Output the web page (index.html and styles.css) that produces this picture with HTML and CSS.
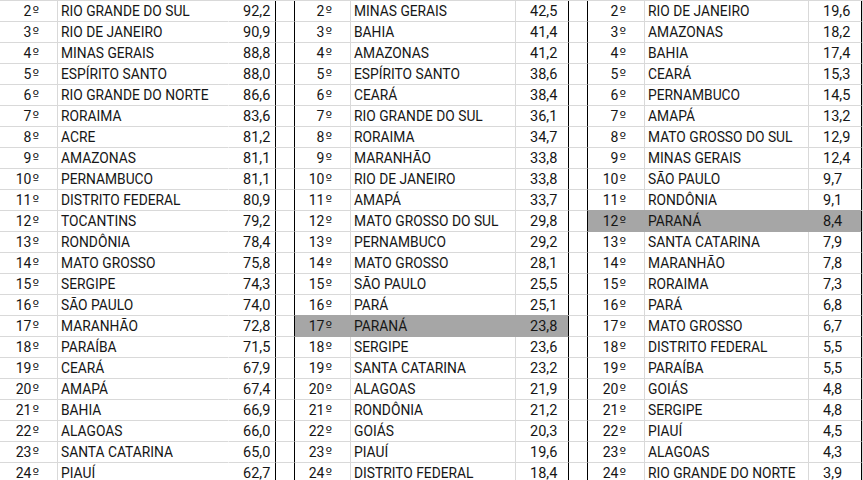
FILE: index.html
```html
<!DOCTYPE html>
<html lang="pt">
<head>
<meta charset="utf-8">
<title>Ranking</title>
<link rel="stylesheet" href="styles.css">
</head>
<body>
<div class="sheet">
  <div class="row"><div class="r">2<span class="o">º</span></div><div class="n nb">RIO GRANDE DO SUL</div><div class="v end">92,2</div><div class="g end"></div><div class="r">2<span class="o">º</span></div><div class="n">MINAS GERAIS</div><div class="v end">42,5</div><div class="g end"></div><div class="r">2<span class="o">º</span></div><div class="n">RIO DE JANEIRO</div><div class="v end">19,6</div><div class="g"></div></div>
  <div class="row"><div class="r">3<span class="o">º</span></div><div class="n nb">RIO DE JANEIRO</div><div class="v end">90,9</div><div class="g end"></div><div class="r">3<span class="o">º</span></div><div class="n">BAHIA</div><div class="v end">41,4</div><div class="g end"></div><div class="r">3<span class="o">º</span></div><div class="n">AMAZONAS</div><div class="v end">18,2</div><div class="g"></div></div>
  <div class="row"><div class="r">4<span class="o">º</span></div><div class="n nb">MINAS GERAIS</div><div class="v end">88,8</div><div class="g end"></div><div class="r">4<span class="o">º</span></div><div class="n">AMAZONAS</div><div class="v end">41,2</div><div class="g end"></div><div class="r">4<span class="o">º</span></div><div class="n">BAHIA</div><div class="v end">17,4</div><div class="g"></div></div>
  <div class="row"><div class="r">5<span class="o">º</span></div><div class="n nb">ESPÍRITO SANTO</div><div class="v end">88,0</div><div class="g end"></div><div class="r">5<span class="o">º</span></div><div class="n">ESPÍRITO SANTO</div><div class="v end">38,6</div><div class="g end"></div><div class="r">5<span class="o">º</span></div><div class="n">CEARÁ</div><div class="v end">15,3</div><div class="g"></div></div>
  <div class="row"><div class="r">6<span class="o">º</span></div><div class="n nb">RIO GRANDE DO NORTE</div><div class="v end">86,6</div><div class="g end"></div><div class="r">6<span class="o">º</span></div><div class="n">CEARÁ</div><div class="v end">38,4</div><div class="g end"></div><div class="r">6<span class="o">º</span></div><div class="n">PERNAMBUCO</div><div class="v end">14,5</div><div class="g"></div></div>
  <div class="row"><div class="r">7<span class="o">º</span></div><div class="n nb">RORAIMA</div><div class="v end">83,6</div><div class="g end"></div><div class="r">7<span class="o">º</span></div><div class="n">RIO GRANDE DO SUL</div><div class="v end">36,1</div><div class="g end"></div><div class="r">7<span class="o">º</span></div><div class="n">AMAPÁ</div><div class="v end">13,2</div><div class="g"></div></div>
  <div class="row"><div class="r">8<span class="o">º</span></div><div class="n nb">ACRE</div><div class="v end">81,2</div><div class="g end"></div><div class="r">8<span class="o">º</span></div><div class="n">RORAIMA</div><div class="v end">34,7</div><div class="g end"></div><div class="r">8<span class="o">º</span></div><div class="n">MATO GROSSO DO SUL</div><div class="v end">12,9</div><div class="g"></div></div>
  <div class="row"><div class="r">9<span class="o">º</span></div><div class="n nb">AMAZONAS</div><div class="v end">81,1</div><div class="g end"></div><div class="r">9<span class="o">º</span></div><div class="n">MARANHÃO</div><div class="v end">33,8</div><div class="g end"></div><div class="r">9<span class="o">º</span></div><div class="n">MINAS GERAIS</div><div class="v end">12,4</div><div class="g"></div></div>
  <div class="row"><div class="r">10<span class="o">º</span></div><div class="n nb">PERNAMBUCO</div><div class="v end">81,1</div><div class="g end"></div><div class="r">10<span class="o">º</span></div><div class="n">RIO DE JANEIRO</div><div class="v end">33,8</div><div class="g end"></div><div class="r">10<span class="o">º</span></div><div class="n">SÃO PAULO</div><div class="v end">9,7</div><div class="g"></div></div>
  <div class="row"><div class="r">11<span class="o">º</span></div><div class="n nb">DISTRITO FEDERAL</div><div class="v end">80,9</div><div class="g end"></div><div class="r">11<span class="o">º</span></div><div class="n">AMAPÁ</div><div class="v end">33,7</div><div class="g end"></div><div class="r">11<span class="o">º</span></div><div class="n">RONDÔNIA</div><div class="v end">9,1</div><div class="g"></div></div>
  <div class="row"><div class="r">12<span class="o">º</span></div><div class="n nb">TOCANTINS</div><div class="v end">79,2</div><div class="g end"></div><div class="r">12<span class="o">º</span></div><div class="n">MATO GROSSO DO SUL</div><div class="v end">29,8</div><div class="g end"></div><div class="r hl">12<span class="o">º</span></div><div class="n hl">PARANÁ</div><div class="v end hl">8,4</div><div class="g"></div></div>
  <div class="row"><div class="r">13<span class="o">º</span></div><div class="n nb">RONDÔNIA</div><div class="v end">78,4</div><div class="g end"></div><div class="r">13<span class="o">º</span></div><div class="n">PERNAMBUCO</div><div class="v end">29,2</div><div class="g end"></div><div class="r">13<span class="o">º</span></div><div class="n">SANTA CATARINA</div><div class="v end">7,9</div><div class="g"></div></div>
  <div class="row"><div class="r">14<span class="o">º</span></div><div class="n nb">MATO GROSSO</div><div class="v end">75,8</div><div class="g end"></div><div class="r">14<span class="o">º</span></div><div class="n">MATO GROSSO</div><div class="v end">28,1</div><div class="g end"></div><div class="r">14<span class="o">º</span></div><div class="n">MARANHÃO</div><div class="v end">7,8</div><div class="g"></div></div>
  <div class="row"><div class="r">15<span class="o">º</span></div><div class="n nb">SERGIPE</div><div class="v end">74,3</div><div class="g end"></div><div class="r">15<span class="o">º</span></div><div class="n">SÃO PAULO</div><div class="v end">25,5</div><div class="g end"></div><div class="r">15<span class="o">º</span></div><div class="n">RORAIMA</div><div class="v end">7,3</div><div class="g"></div></div>
  <div class="row"><div class="r">16<span class="o">º</span></div><div class="n nb">SÃO PAULO</div><div class="v end">74,0</div><div class="g end"></div><div class="r">16<span class="o">º</span></div><div class="n">PARÁ</div><div class="v end">25,1</div><div class="g end"></div><div class="r">16<span class="o">º</span></div><div class="n">PARÁ</div><div class="v end">6,8</div><div class="g"></div></div>
  <div class="row"><div class="r">17<span class="o">º</span></div><div class="n nb">MARANHÃO</div><div class="v end">72,8</div><div class="g end"></div><div class="r hl">17<span class="o">º</span></div><div class="n hl">PARANÁ</div><div class="v end hl">23,8</div><div class="g end"></div><div class="r">17<span class="o">º</span></div><div class="n">MATO GROSSO</div><div class="v end">6,7</div><div class="g"></div></div>
  <div class="row"><div class="r">18<span class="o">º</span></div><div class="n nb">PARAÍBA</div><div class="v end">71,5</div><div class="g end"></div><div class="r">18<span class="o">º</span></div><div class="n">SERGIPE</div><div class="v end">23,6</div><div class="g end"></div><div class="r">18<span class="o">º</span></div><div class="n">DISTRITO FEDERAL</div><div class="v end">5,5</div><div class="g"></div></div>
  <div class="row"><div class="r">19<span class="o">º</span></div><div class="n nb">CEARÁ</div><div class="v end">67,9</div><div class="g end"></div><div class="r">19<span class="o">º</span></div><div class="n">SANTA CATARINA</div><div class="v end">23,2</div><div class="g end"></div><div class="r">19<span class="o">º</span></div><div class="n">PARAÍBA</div><div class="v end">5,5</div><div class="g"></div></div>
  <div class="row"><div class="r">20<span class="o">º</span></div><div class="n nb">AMAPÁ</div><div class="v end">67,4</div><div class="g end"></div><div class="r">20<span class="o">º</span></div><div class="n">ALAGOAS</div><div class="v end">21,9</div><div class="g end"></div><div class="r">20<span class="o">º</span></div><div class="n">GOIÁS</div><div class="v end">4,8</div><div class="g"></div></div>
  <div class="row"><div class="r">21<span class="o">º</span></div><div class="n nb">BAHIA</div><div class="v end">66,9</div><div class="g end"></div><div class="r">21<span class="o">º</span></div><div class="n">RONDÔNIA</div><div class="v end">21,2</div><div class="g end"></div><div class="r">21<span class="o">º</span></div><div class="n">SERGIPE</div><div class="v end">4,8</div><div class="g"></div></div>
  <div class="row"><div class="r">22<span class="o">º</span></div><div class="n nb">ALAGOAS</div><div class="v end">66,0</div><div class="g end"></div><div class="r">22<span class="o">º</span></div><div class="n">GOIÁS</div><div class="v end">20,3</div><div class="g end"></div><div class="r">22<span class="o">º</span></div><div class="n">PIAUÍ</div><div class="v end">4,5</div><div class="g"></div></div>
  <div class="row"><div class="r">23<span class="o">º</span></div><div class="n nb">SANTA CATARINA</div><div class="v end">65,0</div><div class="g end"></div><div class="r">23<span class="o">º</span></div><div class="n">PIAUÍ</div><div class="v end">19,6</div><div class="g end"></div><div class="r">23<span class="o">º</span></div><div class="n">ALAGOAS</div><div class="v end">4,3</div><div class="g"></div></div>
  <div class="row"><div class="r">24<span class="o">º</span></div><div class="n nb">PIAUÍ</div><div class="v end">62,7</div><div class="g end"></div><div class="r">24<span class="o">º</span></div><div class="n">DISTRITO FEDERAL</div><div class="v end">18,4</div><div class="g end"></div><div class="r">24<span class="o">º</span></div><div class="n">RIO GRANDE DO NORTE</div><div class="v end">3,9</div><div class="g"></div></div>
</div>
</body>
</html>
```

FILE: styles.css
```css
* {
  box-sizing: border-box;
  margin: 0;
  padding: 0;
}

html, body {
  width: 863px;
  height: 480px;
  overflow: hidden;
  background: #ffffff;
}

body {
  font-family: Roboto, "Open Sans", sans-serif;
  font-size: 13.8px;
  color: #161616;
}

.sheet {
  border-top: 1px solid #d9d9d9;
}

.row {
  display: grid;
  grid-template-columns: 58px 171px 47px 19px 56px 165px 53px 19px 57px 164px 53px 1px;
  height: 21px;
}

.row > div {
  display: flex;
  align-items: center;
  white-space: nowrap;
  overflow: hidden;
  border-right: 1px solid #d9d9d9;
  border-bottom: 1px solid #d9d9d9;
}

.r {
  justify-content: flex-end;
  padding-right: 18px;
  font-size: 14px;
}

.o {
  font-family: "DejaVu Sans", sans-serif;
  font-size: 14px;
  margin-left: 1px;
}

.n {
  padding-left: 3px;
}

.row > .nb {
  border-right-color: transparent;
}

.v {
  padding-left: 14px;
  font-size: 14.5px;
}

.row > .hl {
  background: #a6a6a6;
  border-color: #a6a6a6;
  box-shadow: 0 -1px 0 #a6a6a6;
}

.row > .end {
  border-right-color: #000000;
}
```
